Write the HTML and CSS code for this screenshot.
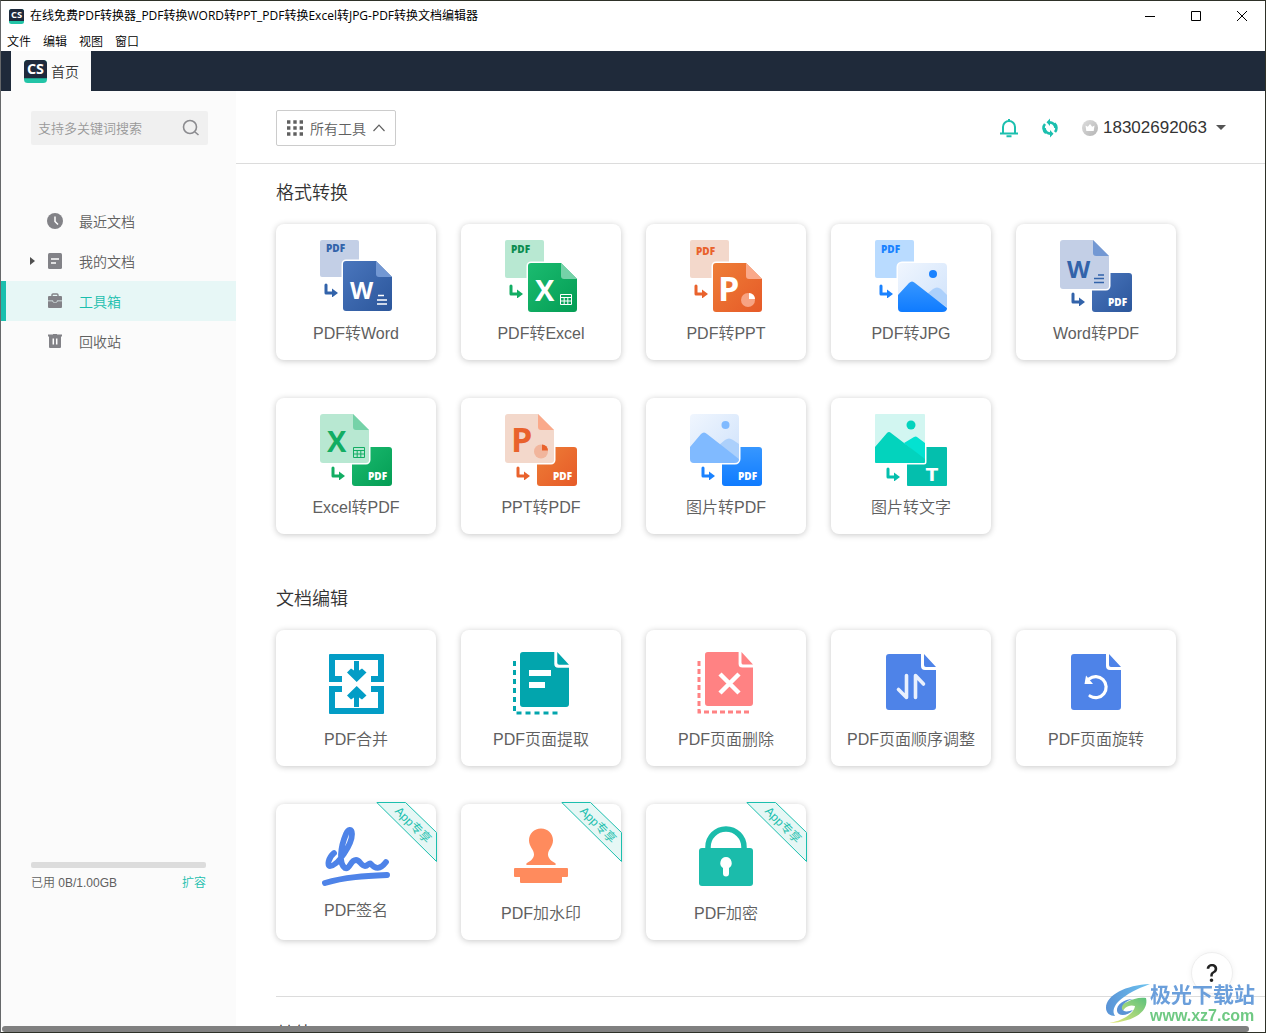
FILE: index.html
```html
<!DOCTYPE html>
<html lang="zh-CN">
<head>
<meta charset="utf-8">
<meta name="viewport" content="width=device-width, initial-scale=1">
<title>在线免费PDF转换器</title>
<link rel="stylesheet" href="styles.css">
</head>
<body>
<svg class="defs" width="0" height="0" aria-hidden="true">
  <defs>
    <linearGradient id="g-word" x1="0" y1="0" x2="1" y2="1"><stop offset="0" stop-color="#4a76bd"/><stop offset="1" stop-color="#2b569b"/></linearGradient>
    <linearGradient id="g-excel" x1="0" y1="0" x2="1" y2="1"><stop offset="0" stop-color="#1bbb70"/><stop offset="1" stop-color="#049d54"/></linearGradient>
    <linearGradient id="g-ppt" x1="0" y1="0" x2="1" y2="1"><stop offset="0" stop-color="#ee7e37"/><stop offset="1" stop-color="#e65a28"/></linearGradient>
    <linearGradient id="g-jpg" x1="0" y1="0" x2="0" y2="1"><stop offset="0" stop-color="#3797ff"/><stop offset="1" stop-color="#0f7bff"/></linearGradient>
    <linearGradient id="g-sky" x1="0" y1="0" x2="1" y2="1"><stop offset="0" stop-color="#f0f6fe"/><stop offset="1" stop-color="#cfe2fb"/></linearGradient>
    <linearGradient id="g-coin" x1="0" y1="0" x2="1" y2="1"><stop offset="0" stop-color="#dedede"/><stop offset="1" stop-color="#b4b4b4"/></linearGradient>
    <linearGradient id="g-swirl" x1="0" y1="0" x2="1" y2="0"><stop offset="0" stop-color="#5a93d6"/><stop offset="1" stop-color="#6cc4f0"/></linearGradient>
    <linearGradient id="g-leaf" x1="0" y1="1" x2="1" y2="0"><stop offset="0" stop-color="#e9e97a"/><stop offset="1" stop-color="#5bc17c"/></linearGradient>
    <symbol id="cs" viewBox="0 0 24 24">
      <rect width="24" height="24" rx="4" fill="#23c4a7"/>
      <path d="M4 0h16a4 4 0 0 1 4 4v15H0V4a4 4 0 0 1 4-4z" fill="#1f2a3c"/>
      <text x="12" y="15" text-anchor="middle" class="cs-text">CS</text>
    </symbol>
    <symbol id="turn" viewBox="0 0 14 14">
      <path d="M2 2v8h6" fill="none" stroke="currentColor" stroke-width="3" stroke-linecap="round" stroke-linejoin="round"/>
      <path d="M8 5.500v9l6-4.500z" fill="currentColor"/>
    </symbol>
    <symbol id="grid" viewBox="0 0 12 11">
      <path d="M.5.500h11v10H.5zM.5 3.500h11M.5 7h11M4.200 3.500v7M7.800 3.500v7" fill="none" stroke="currentColor"/>
    </symbol>
    <symbol id="page" viewBox="0 0 50 56">
      <path d="M3 0h32v12a4 4 0 0 0 4 4h11v37a3 3 0 0 1-3 3H3a3 3 0 0 1-3-3V3a3 3 0 0 1 3-3zM38 0l12 13H40a2 2 0 0 1-2-2z" fill="currentColor"/>
    </symbol>
    <symbol id="ribbon" viewBox="0 0 61 60">
      <path d="M.8.500H29.500L60.500 30.500V59.500z" fill="#e6f7f5" stroke="#1bbfae"/>
      <text x="0" y="4" text-anchor="middle" transform="translate(37 23) rotate(45)" class="ribbon-text">App专享</text>
    </symbol>
  </defs>
</svg>

<div class="window">
  <header class="titlebar">
    <svg class="titlebar-logo"><use href="#cs"/></svg>
    <span class="titlebar-text">在线免费PDF转换器_PDF转换WORD转PPT_PDF转换Excel转JPG-PDF转换文档编辑器</span>
    <div class="controls">
      <button type="button" aria-label="最小化"><svg width="12" height="12"><path d="M1 6.500h10" stroke="#000"/></svg></button>
      <button type="button" aria-label="最大化"><svg width="12" height="12"><path d="M1.500 1.500h9v9h-9z" fill="none" stroke="#000"/></svg></button>
      <button type="button" aria-label="关闭"><svg width="12" height="12"><path d="M1 1l10 10M11 1L1 11" stroke="#000"/></svg></button>
    </div>
  </header>
  <nav class="menubar">
    <button type="button">文件</button><button type="button">编辑</button><button type="button">视图</button><button type="button">窗口</button>
  </nav>
  <div class="tabs">
    <a class="tab" href="#home"><svg class="tab-logo"><use href="#cs"/></svg>首页</a>
  </div>

  <div class="workspace">
    <aside class="sidebar">
      <label class="search">
        <input type="text" placeholder="支持多关键词搜索" aria-label="搜索">
        <svg width="18" height="18" fill="none" stroke="#8b8b8f" stroke-width="1.600"><circle cx="8" cy="8" r="6.500"/><path d="M13 13l3.500 3"/></svg>
      </label>
      <nav class="nav">
        <a href="#recent"><svg width="16" height="16"><circle cx="8" cy="8" r="8" fill="#828287"/><path d="M8 3.500V8.500l3 3" fill="none" stroke="#fff" stroke-width="1.500"/></svg>最近文档</a>
        <a class="has-children" href="#mine"><svg width="16" height="16"><rect x="1" width="14" height="16" rx="1.500" fill="#828287"/><path d="M4 6h8M4 10h5" stroke="#fff" stroke-width="1.600"/></svg>我的文档</a>
        <a class="active" href="#tools"><svg width="16" height="16"><path d="M5 3.500V2a1 1 0 0 1 1-1h4a1 1 0 0 1 1 1v1.500" fill="none" stroke="#828287" stroke-width="1.400"/><path d="M2 3h12a1 1 0 0 1 1 1v3.500H10a2 2 0 0 1-4 0H1V4a1 1 0 0 1 1-1zM1 8.200h4.300a3 3 0 0 0 5.400 0H15V14a1 1 0 0 1-1 1H2a1 1 0 0 1-1-1z" fill="#828287"/></svg>工具箱</a>
        <a href="#trash"><svg width="16" height="16"><path d="M1 1.500h5V1h4v.5h5v2h-1V14a1 1 0 0 1-1 1H3a1 1 0 0 1-1-1V3.500H1z" fill="#828287"/><path d="M6.300 5.500v6M9.700 5.500v6" stroke="#fff" stroke-width="1.500"/></svg>回收站</a>
      </nav>
      <div class="storage">
        <div class="storage-bar"></div>
        <div class="storage-row"><span>已用 0B/1.00GB</span><a href="#upgrade">扩容</a></div>
      </div>
    </aside>

    <main class="main">
      <div class="toolbar">
        <button type="button" class="all-tools">
          <svg width="16" height="16" fill="none" stroke="#606060" stroke-width="3.400" stroke-dasharray="3.400 2.900"><path d="M0 2h16M0 8h16M0 14h16"/></svg>
          <span>所有工具</span>
          <svg width="12" height="8" fill="none" stroke="#606060" stroke-width="1.200"><path d="M.5 7L6 1.200 11.500 7"/></svg>
        </button>
        <div class="account">
          <button type="button" aria-label="通知"><svg width="18" height="20" fill="none" stroke="#1bbfae" stroke-width="2"><path d="M3 15V9a6 6 0 0 1 12 0v6M0 15.500h18"/><path d="M9 1v2M6.500 18.200h5"/></svg></button>
          <button type="button" aria-label="同步"><svg width="16" height="20" fill="none" stroke="#1bbfae" stroke-width="2.600"><path d="M4 15A6.200 6.200 0 0 1 3 6M7 4.400a6 6 0 0 1 6.500 5.600M12.500 5.500A6.200 6.200 0 0 1 13 14M9 15.600A6 6 0 0 1 2.500 10" stroke-dasharray="10 40"/><path d="M8 .5L4.500 4.300 8 8zM8 12l3.500 3.700L8 19.500z" fill="#1bbfae" stroke="none"/></svg></button>
          <button type="button" class="user">
            <svg width="16" height="16"><circle cx="8" cy="8" r="8" fill="url(#g-coin)"/><path d="M3.500 5.500l2.300 1.300L8 4l2.200 2.800 2.300-1.300-.8 5.500H4.300z" fill="#fff"/></svg>
            <span>18302692063</span>
            <svg width="10" height="6"><path d="M0 0h10L5 5z" fill="#555"/></svg>
          </button>
        </div>
      </div>

      <div class="content">
        <section class="group">
          <h2>格式转换</h2>
          <div class="cards">
            <button type="button" class="card">
              <svg class="icon" viewBox="0 0 72 72">
                <rect width="39" height="37" rx="2" fill="#c3cfe6"/><text x="6" y="12" class="pdf" fill="#3263aa">PDF</text>
                <path d="M26 21h30l16 16v31a3 3 0 0 1-3 3H26a3 3 0 0 1-3-3V24a3 3 0 0 1 3-3z" fill="url(#g-word)" stroke="#fff" stroke-width="3" paint-order="stroke"/>
                <path d="M56 21l16 16H59a3 3 0 0 1-3-3z" fill="#7398d3"/><text x="30" y="59" class="l24" fill="#fff">W</text>
                <path d="M58 55.500h6M57 60h10M57 64h10" stroke="#fff" stroke-width="1.400"/>
                <use href="#turn" x="4" y="43" width="14" height="14" color="#3263aa"/>
              </svg><span>PDF转Word</span></button>
            <button type="button" class="card">
              <svg class="icon" viewBox="0 0 72 72">
                <rect width="39" height="38" rx="2" fill="#b8e8d2"/><text x="6" y="13" class="pdf" fill="#0c8d50">PDF</text>
                <path d="M26 23h30l16 16v30a3 3 0 0 1-3 3H26a3 3 0 0 1-3-3V26a3 3 0 0 1 3-3z" fill="url(#g-excel)" stroke="#fff" stroke-width="3" paint-order="stroke"/>
                <path d="M56 23l16 16H59a3 3 0 0 1-3-3z" fill="#75d2a8"/><text x="30" y="61" class="l29" fill="#fff">X</text>
                <use href="#grid" x="55" y="54" width="12" height="11" color="#fff"/>
                <use href="#turn" x="4" y="44" width="14" height="14" color="#12ad63"/>
              </svg><span>PDF转Excel</span></button>
            <button type="button" class="card">
              <svg class="icon" viewBox="0 0 72 72">
                <rect width="39" height="38" rx="2" fill="#f3d8cb"/><text x="6" y="15" class="pdf" fill="#e9622c">PDF</text>
                <path d="M26 23h30l16 16v30a3 3 0 0 1-3 3H26a3 3 0 0 1-3-3V26a3 3 0 0 1 3-3z" fill="url(#g-ppt)" stroke="#fff" stroke-width="3" paint-order="stroke"/>
                <path d="M56 23l16 16H59a3 3 0 0 1-3-3z" fill="#faa98a"/><text x="28" y="61" class="l34" fill="#fff">P</text>
                <circle cx="58" cy="60" r="7" fill="#f7a383"/><path d="M59 59v-6a6 6 0 0 1 6 6z" fill="#fff"/>
                <use href="#turn" x="4" y="44" width="14" height="14" color="#e9622c"/>
              </svg><span>PDF转PPT</span></button>
            <button type="button" class="card">
              <svg class="icon" viewBox="0 0 72 72">
                <rect width="39" height="38" rx="2" fill="#b9dbff"/><text x="6" y="13" class="pdf" fill="#1a82ff">PDF</text>
                <rect x="23" y="23" width="49" height="49" rx="4" fill="url(#g-sky)" stroke="#fff" stroke-width="3" paint-order="stroke"/>
                <circle cx="58" cy="34" r="4" fill="#1a82ff"/><path d="M52 54l6-5q4-3 8 0l6 6v12z" fill="#acd0fb"/>
                <path d="M23 55l11-12q3-3 6 0l32 25q0 4-5 4H27q-4 0-4-4z" fill="url(#g-jpg)"/>
                <use href="#turn" x="4" y="44" width="14" height="14" color="#1a82ff"/>
              </svg><span>PDF转JPG</span></button>
            <button type="button" class="card">
              <svg class="icon" viewBox="0 0 72 72">
                <rect x="32" y="33" width="40" height="39" rx="3" fill="url(#g-word)"/>
                <path d="M3 0h30l16 16v30a3 3 0 0 1-3 3H3a3 3 0 0 1-3-3V3a3 3 0 0 1 3-3z" fill="#c3cfe6" stroke="#fff" stroke-width="3" paint-order="stroke"/>
                <path d="M33 0l16 16H36a3 3 0 0 1-3-3z" fill="#7398d3"/><text x="7" y="38" class="l24" fill="#3263aa">W</text>
                <path d="M38 35h6M34 38.500h10M34 42.500h10" stroke="#3263aa" stroke-width="1.300"/>
                <use href="#turn" x="11" y="52" width="14" height="14" color="#3263aa"/><text x="48" y="66" class="pdf" fill="#fff">PDF</text>
              </svg><span>Word转PDF</span></button>
            <button type="button" class="card">
              <svg class="icon" viewBox="0 0 72 72">
                <rect x="32" y="33" width="40" height="39" rx="3" fill="url(#g-excel)"/>
                <path d="M3 0h30l16 16v30a3 3 0 0 1-3 3H3a3 3 0 0 1-3-3V3a3 3 0 0 1 3-3z" fill="#b8e8d2" stroke="#fff" stroke-width="3" paint-order="stroke"/>
                <path d="M33 0l16 16H36a3 3 0 0 1-3-3z" fill="#75d2a8"/><text x="7" y="38" class="l29" fill="#12ad63">X</text>
                <use href="#grid" x="33" y="33" width="12" height="11" color="#12ad63"/>
                <use href="#turn" x="11" y="52" width="14" height="14" color="#12ad63"/><text x="48" y="66" class="pdf" fill="#fff">PDF</text>
              </svg><span>Excel转PDF</span></button>
            <button type="button" class="card">
              <svg class="icon" viewBox="0 0 72 72">
                <rect x="32" y="33" width="40" height="39" rx="3" fill="url(#g-ppt)"/>
                <path d="M3 0h30l16 16v30a3 3 0 0 1-3 3H3a3 3 0 0 1-3-3V3a3 3 0 0 1 3-3z" fill="#f3d8cb" stroke="#fff" stroke-width="3" paint-order="stroke"/>
                <path d="M33 0l16 16H36a3 3 0 0 1-3-3z" fill="#faa98a"/><text x="6" y="38" class="l34" fill="#e9622c">P</text>
                <circle cx="36" cy="37.500" r="7" fill="#f1b59c"/><path d="M37 36.500v-6a6 6 0 0 1 6 6z" fill="#e9622c"/>
                <use href="#turn" x="11" y="52" width="14" height="14" color="#e9622c"/><text x="48" y="66" class="pdf" fill="#fff">PDF</text>
              </svg><span>PPT转PDF</span></button>
            <button type="button" class="card">
              <svg class="icon" viewBox="0 0 72 72">
                <rect x="32" y="33" width="40" height="39" rx="3" fill="url(#g-jpg)"/>
                <rect width="49" height="49" rx="4" fill="url(#g-sky)" stroke="#fff" stroke-width="3" paint-order="stroke"/>
                <circle cx="35.500" cy="11" r="4" fill="#80baff"/><path d="M29 31l6-5q4-3 8 0l6 4v15z" fill="#acd0fb"/>
                <path d="M0 33l11-13q3-3 6 0l32 25q0 4-5 4H4q-4 0-4-4z" fill="#80baff"/>
                <use href="#turn" x="11" y="52" width="14" height="14" color="#1a82ff"/><text x="48" y="66" class="pdf" fill="#fff">PDF</text>
              </svg><span>图片转PDF</span></button>
            <button type="button" class="card">
              <svg class="icon" viewBox="0 0 72 72">
                <rect x="32" y="33" width="40" height="39" rx="1" fill="#04bfad"/>
                <rect width="50" height="49" rx="1" fill="#d2f6f1" stroke="#fff" stroke-width="3" paint-order="stroke"/>
                <circle cx="36" cy="11" r="4.500" fill="#03d3bd"/><path d="M29 29l10-6q2-1 3 0l8 6v18z" fill="#03e2d1"/>
                <path d="M0 33l12-14q2-2 4 0l34 26v3q0 1-1 1H1q-1 0-1-1z" fill="#03d3bd"/>
                <use href="#turn" x="11" y="53" width="14" height="14" color="#04bfad"/><text x="57" y="67" text-anchor="middle" class="t" fill="#fff">T</text>
              </svg><span>图片转文字</span></button>
          </div>
        </section>

        <section class="group">
          <h2>文档编辑</h2>
          <div class="cards">
            <button type="button" class="card">
              <svg class="icon" viewBox="0 0 72 72" fill="#039dc6">
                <path d="M10 8h53q1 0 1 1v27H51v-6h7V14H15v16h7v6H9V9q0-1 1-1zM9 40h13v6h-7v16h43V46h-7v-6h13v27q0 1-1 1H10q-1 0-1-1z"/>
                <path d="M34 15h5v9.500l3-2 4.500 4L36.700 36 27 26.500l4-4 3 2zM34 61h5v-9.500l3 2 4.500-4L36.700 40 27 49.500l4 4 3-2z"/>
              </svg><span>PDF合并</span></button>
            <button type="button" class="card">
              <svg class="icon" viewBox="0 0 72 72">
                <use href="#page" x="15" y="6" width="49" height="55" color="#02a5ad"/>
                <path d="M24 27h22M24 39h16" stroke="#fff" stroke-width="6"/>
                <path d="M9.500 15v52H56" fill="none" stroke="#02a5ad" stroke-width="3" stroke-dasharray="5 4"/>
              </svg><span>PDF页面提取</span></button>
            <button type="button" class="card">
              <svg class="icon" viewBox="0 0 72 72">
                <use href="#page" x="15" y="6" width="48" height="54" color="#ff8283"/>
                <path d="M30 28l19 19M49 28L30 47" stroke="#fff" stroke-width="4.500"/>
                <path d="M9 15v51h50" fill="none" stroke="#ff8283" stroke-width="3" stroke-dasharray="5 3"/>
              </svg><span>PDF页面删除</span></button>
            <button type="button" class="card">
              <svg class="icon" viewBox="0 0 72 72">
                <use href="#page" x="11" y="8" width="50" height="56" color="#4e83e8"/>
                <path d="M31.500 29.500v22l-8-8M40.500 51.500v-22l8 8.500" fill="none" stroke="#e9f0fd" stroke-width="3.600" stroke-linecap="round" stroke-linejoin="round"/>
              </svg><span>PDF页面顺序调整</span></button>
            <button type="button" class="card">
              <svg class="icon" viewBox="0 0 72 72">
                <use href="#page" x="11" y="8" width="50" height="56" color="#4e83e8"/>
                <path d="M29 33a10.500 10.500 0 1 1 1 17" fill="none" stroke="#fff" stroke-width="3.200" stroke-linecap="round"/><path d="M24.500 38L26 29.500l7 8.500z" fill="#fff"/>
              </svg><span>PDF页面旋转</span></button>
            <button type="button" class="card card-sign">
              <svg class="icon" viewBox="0 0 72 69" fill="none" stroke="#4e83e8" stroke-width="5.800" stroke-linecap="round" stroke-linejoin="round">
                <path d="M14 33C8 38 7 46 10 46 18 46 32 24 32 14 32 8 28 9 26 14 20 28 19 44 25 48 30 50 30 40 36 40 40 40 41 46 45 46 48 46 49 42 51 44 55 49 60 50 66 42"/>
                <path d="M5 63c20-6 40-7 62-8" stroke-width="6"/>
              </svg><span>PDF签名</span><svg class="ribbon"><use href="#ribbon"/></svg></button>
            <button type="button" class="card">
              <svg class="icon" viewBox="0 0 72 72" fill="#ff8b5d">
                <path d="M36 8.500c7 0 12 5 12 12 0 6-5 9-5 14 0 4 4 7 7 8.500 1 .6 1 2 0 2H22c-1 0-1-1.400 0-2 3-1.500 7-4.500 7-8.500 0-5-5-8-5-14 0-7 5-12 12-12zM10 48h52q1 0 1 1v7q0 1-1 1h-5v5q0 1-1 1H16q-1 0-1-1v-5h-5q-1 0-1-1v-7q0-1 1-1z"/>
              </svg><span>PDF加水印</span><svg class="ribbon"><use href="#ribbon"/></svg></button>
            <button type="button" class="card">
              <svg class="icon" viewBox="0 0 72 72">
                <path d="M18 30v-3a18 18 0 0 1 36 0v3" fill="none" stroke="#1bbcab" stroke-width="5.500"/><rect x="9" y="28" width="54" height="38" rx="3" fill="#1bbcab"/>
                <path d="M36 37a6 6 0 0 1 3 11v5.500a3 3 0 0 1-6 0V48a6 6 0 0 1 3-11z" fill="#fff"/>
              </svg><span>PDF加密</span><svg class="ribbon"><use href="#ribbon"/></svg></button>
          </div>
        </section>

        <section class="group group-more"><h2>其他</h2></section>
      </div>
    </main>
  </div>
  <div class="scrollbar"><div class="scroll-thumb"></div></div>
</div>

<button type="button" class="help" aria-label="帮助">?</button>
<div class="watermark">
  <svg width="44" height="42" viewBox="0 0 44 42">
    <path d="M44 1C20 2 0 12 0 25c0 5 4 8 9 8-6-10 8-22 35-32z" fill="url(#g-swirl)"/>
    <path d="M40 15c3 12-10 24-37 25 13-2 25-9 26-17-6-2-13 2-12 8-7-2-4-9 4-12 6-3 12-5 19-4z" fill="url(#g-leaf)"/>
    <path d="M27 16c-9 0-17 6-16 12 1 6 11 5 16-1-5 2-10 2-11-1-1-4 4-8 11-10z" fill="#5a93d6"/>
  </svg>
  <div><strong>极光下载站</strong><span>www.xz7.com</span></div>
</div>
</body>
</html>
```
FILE: styles.css
```css
* { box-sizing: border-box; }

body {
  margin: 0;
  font-family: "Liberation Sans", "Noto Sans CJK SC", sans-serif;
  font-size: 14px;
  font-weight: 350;
  color: #606060;
  background: #fff;
}

button {
  border: 0;
  padding: 0;
  background: none;
  font: inherit;
  color: inherit;
}

a { color: inherit; text-decoration: none; }
svg { display: block; flex: none; }
.defs { position: absolute; }

.window {
  display: flex;
  flex-direction: column;
  height: 100vh;
  border: 1px solid #2e3128;
  border-left-color: #66686a;
}

/* Title bar and menu */
.titlebar {
  display: flex;
  align-items: center;
  height: 30px;
  padding-left: 8px;
  gap: 6px;
  color: #000;
}
.titlebar-logo { width: 15px; height: 15px; }
.titlebar-text, .menubar {
  font-family: "Open Sans", "Noto Sans CJK SC", sans-serif;
  font-size: 12px;
}
.titlebar-text { flex: 1; white-space: nowrap; overflow: hidden; line-height: 20px; font-weight: 400; }
.controls { display: flex; }
.controls button { width: 46px; height: 28px; display: grid; place-items: center; }
.menubar {
  display: flex;
  gap: 12px;
  height: 20px;
  padding-left: 6px;
  color: #000;
}
.cs-text {
  font: bold 15px "Open Sans", sans-serif;
  fill: #fff;
}

.tabs {
  display: flex;
  height: 40px;
  padding-left: 10px;
  background: #1f2a3a;
}
.tab {
  display: flex;
  align-items: center;
  gap: 4px;
  padding: 0 12px 0 13px;
  background: #fbfbfb;
  color: #333;
}
.tab-logo { width: 23px; height: 23px; }

.workspace { display: flex; flex: 1; min-height: 0; }

/* Sidebar */
.sidebar {
  display: flex;
  flex-direction: column;
  flex: none;
  width: 235px;
  padding: 20px 0 133px;
  background: #fbfbfb;
}
.search {
  display: flex;
  align-items: center;
  height: 34px;
  margin: 0 28px 0 30px;
  padding: 0 8px 0 7px;
  border-radius: 2px;
  background: #f0f0f0;
}
.search input {
  flex: 1;
  min-width: 0;
  border: 0;
  padding: 0;
  background: none;
  font: inherit;
  font-size: 13px;
}
.search input::placeholder { color: #999; }
.nav { margin-top: 56px; }
.nav a {
  display: flex;
  align-items: center;
  gap: 16px;
  height: 40px;
  padding-left: 46px;
  position: relative;
}
.nav .has-children::before {
  content: "";
  position: absolute;
  left: 29px;
  border: 4px solid transparent;
  border-left: 5px solid #505050;
  border-right: 0;
}
.nav .active {
  padding-left: 41px;
  border-left: 5px solid #1bbfae;
  background: #e7f7f6;
  color: #1bbfae;
}
.storage { margin: auto 30px 0; }
.storage-bar { height: 6px; border-radius: 2px; background: #dcdcdc; }
.storage-row {
  display: flex;
  justify-content: space-between;
  margin-top: 5px;
  font-size: 12px;
  line-height: 20px;
}
.storage-row a { color: #1bbfae; }

/* Main area */
.main {
  display: flex;
  flex-direction: column;
  flex: 1;
  min-width: 0;
}
.toolbar {
  display: flex;
  flex: none;
  align-items: center;
  justify-content: space-between;
  height: 73px;
  padding: 2px 39px 0 40px;
  border-bottom: 1px solid #dcdcdc;
}
.all-tools {
  display: flex;
  align-items: center;
  gap: 7px;
  height: 36px;
  padding: 0 10px;
  border: 1px solid #ccc;
  border-radius: 2px;
}
.account { display: flex; align-items: center; gap: 24px; }
.user {
  display: flex;
  align-items: center;
  gap: 5px;
  color: #333;
  font-size: 17px;
  line-height: 22px;
}
.user svg:last-child { margin-left: 4px; }

.content { flex: 1; min-height: 0; padding: 17px 0 0 40px; overflow: hidden; }
.group { margin-bottom: 53px; }
.group h2 {
  margin: 0 0 19px;
  font-size: 18px;
  font-weight: 350;
  line-height: 24px;
  color: #333;
}
.group-more {
  margin: 56px 0 0;
  padding-top: 25px;
  border-top: 1px solid #dcdcdc;
}
.cards { display: flex; flex-wrap: wrap; gap: 38px 25px; }
.card {
  position: relative;
  display: flex;
  flex-direction: column;
  align-items: center;
  justify-content: flex-start;
  gap: 10px;
  width: 160px;
  height: 136px;
  padding-top: 16px;
  border-radius: 8px;
  background: #fff;
  box-shadow: 0 1px 6px rgba(0, 0, 0, 0.22);
  font-size: 16px;
  line-height: 24px;
  white-space: nowrap;
}
.icon { width: 72px; height: 72px; }
.card-sign .icon { height: 69px; }
.pdf, .l24, .l29, .l34 { font-family: "Open Sans", sans-serif; font-weight: 700; }
.pdf { font-size: 10px; font-weight: 800; }
.l24 { font-size: 24px; }
.l29 { font-size: 29px; }
.l34 { font-size: 34px; }
.t { font: bold 18px "DejaVu Sans", sans-serif; }
.ribbon {
  position: absolute;
  top: -2px;
  right: -1px;
  width: 61px;
  height: 60px;
}
.ribbon-text { font-size: 12px; font-weight: 400; fill: #1bbfae; }

.scrollbar { flex: none; height: 6px; padding: 0 16px 0 1px; background: #fff; }
.scroll-thumb { height: 6px; border-radius: 3px; background: #808080; }

/* Floating items */
.help {
  position: fixed;
  right: 33px;
  bottom: 39px;
  width: 42px;
  height: 42px;
  border: 1px solid #eee;
  border-radius: 50%;
  background: #fff;
  box-shadow: 0 0 6px rgba(0, 0, 0, 0.06);
  color: #222;
  font: 500 24px Inter, sans-serif;
}
.watermark {
  position: fixed;
  right: 11px;
  bottom: 8px;
  display: flex;
  align-items: flex-end;
  pointer-events: none;
}
.watermark div { display: flex; flex-direction: column; }
.watermark strong { font-size: 21px; font-weight: 700; line-height: 24px; color: #6b9fdb; }
.watermark span { font: bold 16px/18px "Liberation Sans", sans-serif; color: #6fc983; }
```
